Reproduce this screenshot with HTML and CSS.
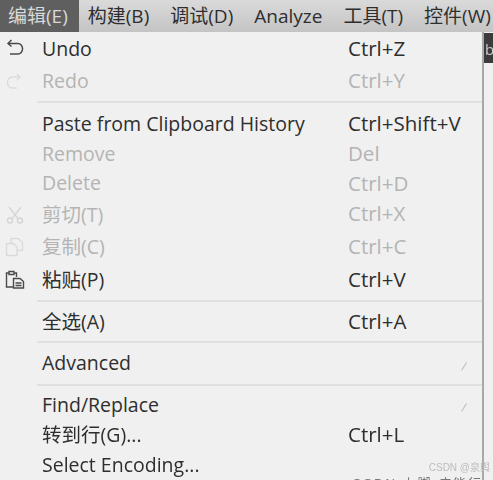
FILE: index.html
```html
<!DOCTYPE html>
<html lang="en">
<head>
    <meta charset="UTF-8">
    <meta name="viewport" content="width=device-width, initial-scale=1.0">
    <title>Edit menu</title>
    <link rel="stylesheet" href="styles.css">
</head>
<body>
    <nav class="menubar">
        <span class="top-item active">编辑(E)</span>
        <span class="top-item">构建(B)</span>
        <span class="top-item">调试(D)</span>
        <span class="top-item">Analyze</span>
        <span class="top-item">工具(T)</span>
        <span class="top-item">控件(W)</span>
    </nav>

    <div class="stage">
        <div class="menu">
            <div class="row undo-row">
                <span class="icon">
                    <svg width="20" height="20" viewBox="0 0 20 20" fill="none" stroke="#4a4a4a" stroke-width="1.5"><path d="M6.5 1 3 4.500l3.500 3"/><path d="M3 4.500h10a4.500 5.200 0 0 1 0 10.500H5"/></svg>
                </span>
                <span class="label">Undo</span>
                <span class="key">Ctrl+Z</span>
            </div>
            <div class="row h32 off">
                <span class="icon">
                    <svg width="20" height="20" viewBox="0 0 20 20" fill="none" stroke="#dcdcdc" stroke-width="1.5"><path d="M12 3l3 3-3 3"/><path d="M15 6H7a4.500 5.500 0 0 0 0 11h5"/></svg>
                </span>
                <span class="label">Redo</span>
                <span class="key">Ctrl+Y</span>
            </div>
            <hr class="sep sep-first">
            <div class="row h30 paste-row">
                <span class="icon"></span>
                <span class="label">Paste from Clipboard History</span>
                <span class="key">Ctrl+Shift+V</span>
            </div>
            <div class="row h30 off">
                <span class="icon"></span>
                <span class="label">Remove</span>
                <span class="key">Del</span>
            </div>
            <div class="row h29 off">
                <span class="icon"></span>
                <span class="label">Delete</span>
                <span class="key">Ctrl+D</span>
            </div>
            <div class="row h32 off">
                <span class="icon">
                    <svg width="20" height="20" viewBox="0 0 20 20" fill="none" stroke="#d6d6d6" stroke-width="1.4"><circle cx="5" cy="16.500" r="2.500"/><circle cx="15" cy="16.500" r="2.500"/><path d="M4 3l9 11.500M16 3 7 14.500"/></svg>
                </span>
                <span class="label">剪切(T)</span>
                <span class="key">Ctrl+X</span>
            </div>
            <div class="row h33 off">
                <span class="icon">
                    <svg width="20" height="20" viewBox="0 0 20 20" fill="none" stroke="#dadada" stroke-width="1.4"><path d="M1.500 6.500h7l3.500 3.500v8.500H1.500z"/><path d="M6 6V1.500h7l4.500 4v8H12"/></svg>
                </span>
                <span class="label">复制(C)</span>
                <span class="key">Ctrl+C</span>
            </div>
            <div class="row h33">
                <span class="icon">
                    <svg width="20" height="20" viewBox="0 0 20 20" fill="none" stroke="#4a4a4a" stroke-width="1.400"><path d="M4 3H1.500v14H8"/><path d="M4 4.500v-3h5v3z"/><path d="M9 3h2.500v4"/><path d="M8.500 8.500H15l3.500 3v6.500h-10z"/><path d="M10.500 13h6M10.500 15.500h6"/></svg>
                </span>
                <span class="label">粘贴(P)</span>
                <span class="key">Ctrl+V</span>
            </div>
            <hr class="sep sep-paste">
            <div class="row h39">
                <span class="icon"></span>
                <span class="label">全选(A)</span>
                <span class="key">Ctrl+A</span>
            </div>
            <hr class="sep">
            <div class="row h41">
                <span class="icon"></span>
                <span class="label">Advanced</span>
                <svg class="arrow" width="6" height="9" viewBox="0 0 6 9" fill="none" stroke="#c2c2c2" stroke-width="1.200"><path d="M5.500.5.500 8.500"/></svg>
            </div>
            <hr class="sep">
            <div class="row h28 find-row">
                <span class="icon"></span>
                <span class="label">Find/Replace</span>
                <svg class="arrow" width="6" height="9" viewBox="0 0 6 9" fill="none" stroke="#c2c2c2" stroke-width="1.200"><path d="M5.500.5.500 8.500"/></svg>
            </div>
            <div class="row h31">
                <span class="icon"></span>
                <span class="label">转到行(G)...</span>
                <span class="key">Ctrl+L</span>
            </div>
            <div class="row h30">
                <span class="icon"></span>
                <span class="label">Select Encoding...</span>
            </div>
        </div>
        <div class="behind">b</div>
    </div>

    <div class="watermark">CSDN @泉舆</div>
    <div class="clipped-line">CSDN 上脚 疾能行</div>
</body>
</html>
```

FILE: styles.css
```css
html,
body {
    margin: 0;
    padding: 0;
    height: 480px;
    overflow: hidden;
}

body {
    position: relative;
    background-color: #f0f0f0;
    color: #2e2e2e;
    font-family: "Open Sans", "Noto Sans CJK SC", sans-serif;
    font-size: 19.5px;
    filter: blur(0.4px);
}

.menubar {
    display: flex;
    height: 32px;
    align-items: center;
    background: linear-gradient(#dadada, #c4c4c4);
    font-size: 19px;
}

.top-item {
    padding: 0 11px 0 10px;
    line-height: 32px;
    white-space: nowrap;
}

.top-item.active {
    margin-right: -1px;
    padding-left: 8px;
    background-color: #5f5f5f;
    color: #d9d9d9;
}

.stage {
    display: flex;
    height: 448px;
}

.menu {
    width: 484px;
    flex: none;
    box-sizing: border-box;
    border-right: 2px solid #a8a8a8;
    background-color: #f0f0f0;
}

.behind {
    flex: 1;
    height: 30px;
    margin-top: 1px;
    padding-left: 1px;
    background-color: #3c3c3c;
    color: #cfcfcf;
    font-size: 15px;
    line-height: 32px;
    overflow: hidden;
}

.row {
    display: flex;
    align-items: center;
}

.undo-row {
    height: 32px;
    margin-top: 1px;
}

.h28 { height: 28px; }
.h29 { height: 29px; }
.h30 { height: 30px; }
.h31 { height: 31px; }
.h32 { height: 32px; }
.h33 { height: 33px; }
.h39 { height: 39px; }
.h41 { height: 41px; }

.paste-row {
    margin-top: 6px;
}

.find-row {
    margin-top: 5px;
}

.off {
    color: #b4b4b4;
}

.icon {
    display: flex;
    width: 42px;
    flex: none;
    padding-left: 5px;
    box-sizing: border-box;
    align-items: center;
}

.label {
    width: 306px;
    margin-bottom: 2px;
    flex: none;
    white-space: nowrap;
}

.key {
    margin-bottom: 2px;
    font-size: 20.5px;
    white-space: nowrap;
}

.arrow {
    margin: 5px 15px 0 auto;
}

.sep {
    height: 2px;
    margin: 0 0 0 37px;
    border: 0;
    background-color: #e0e0e0;
}

.sep-first {
    margin-top: 4px;
}

.sep-paste {
    margin-top: 4px;
}

.watermark {
    position: absolute;
    right: 3px;
    bottom: 6px;
    color: #bcbcbc;
    font-family: "Liberation Sans", "Noto Sans CJK SC", sans-serif;
    font-size: 10px;
}

.clipped-line {
    position: absolute;
    left: 352px;
    top: 476px;
    color: #777;
    font-family: "Liberation Sans", "Noto Sans CJK SC", sans-serif;
    font-size: 13px;
    letter-spacing: 2px;
    line-height: 16px;
    white-space: nowrap;
}
```
